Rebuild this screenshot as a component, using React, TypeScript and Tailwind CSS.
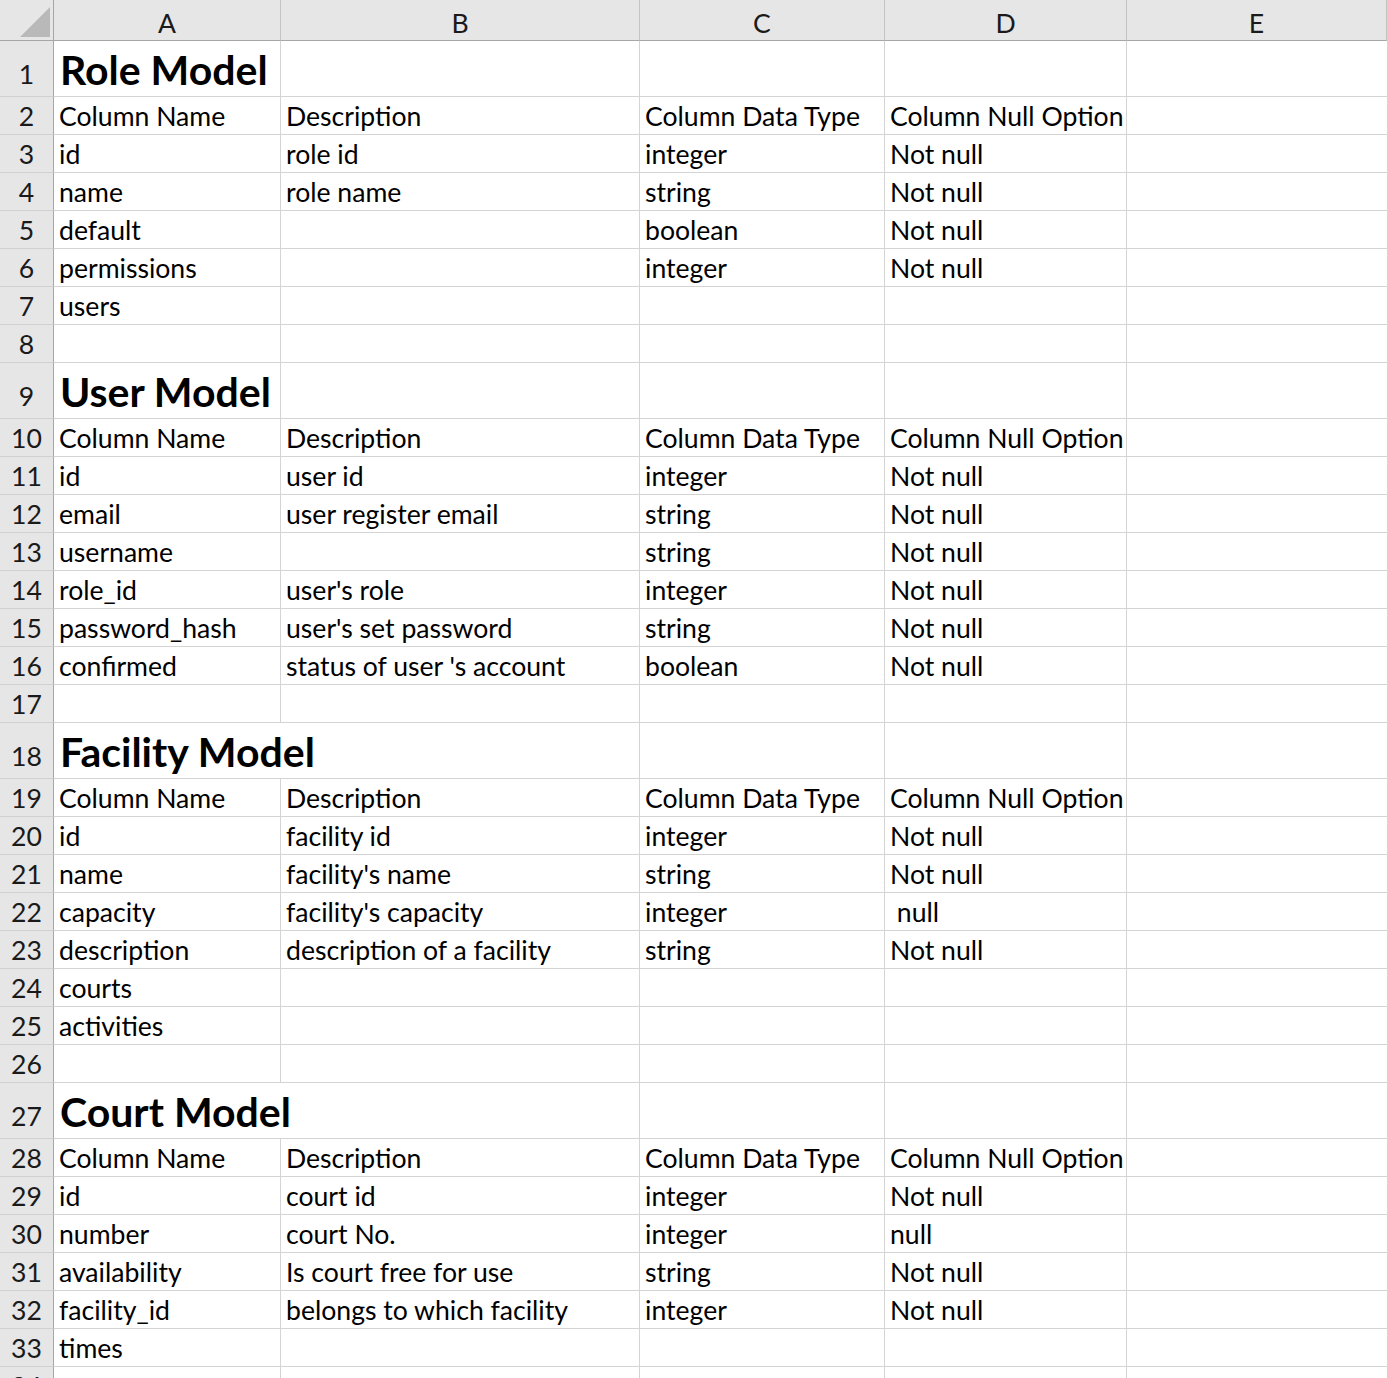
import React from "react";

type Row = { kind: "title" | "data"; cells: string[]; over?: boolean };

const T = (s: string, over = false): Row => ({ kind: "title", cells: [s], over });
const D = (...c: string[]): Row => ({ kind: "data", cells: c });
const H = () => D("Column Name", "Description", "Column Data Type", "Column Null Option");

const rows: Row[] = [
  T("Role Model"),
  H(),
  D("id", "role id", "integer", "Not null"),
  D("name", "role name", "string", "Not null"),
  D("default", "", "boolean", "Not null"),
  D("permissions", "", "integer", "Not null"),
  D("users"),
  D(),
  T("User Model"),
  H(),
  D("id", "user id", "integer", "Not null"),
  D("email", "user register email", "string", "Not null"),
  D("username", "", "string", "Not null"),
  D("role_id", "user's role", "integer", "Not null"),
  D("password_hash", "user's set password", "string", "Not null"),
  D("confirmed", "status of user 's account", "boolean", "Not null"),
  D(),
  T("Facility Model", true),
  H(),
  D("id", "facility id", "integer", "Not null"),
  D("name", "facility's name", "string", "Not null"),
  D("capacity", "facility's capacity", "integer", "\u00a0null"),
  D("description", "description of a facility", "string", "Not null"),
  D("courts"),
  D("activities"),
  D(),
  T("Court Model", true),
  H(),
  D("id", "court id", "integer", "Not null"),
  D("number", "court No.", "integer", "null"),
  D("availability", "Is court free for use", "string", "Not null"),
  D("facility_id", "belongs to which facility", "integer", "Not null"),
  D("times"),
  D(),
];

const font = { fontFamily: "Lato, 'Open Sans', sans-serif" };

export default function App() {
  return (
    <div className="w-[1387px] h-[1378px] overflow-hidden bg-white text-black" style={font}>
      <div className="grid grid-cols-[54px_227px_359px_245px_242px_1fr]">
        {/* header row */}
        <div className="relative h-[41px] bg-[#e6e6e6] border-r border-b border-[#a6a6a6]">
          <div className="absolute right-[3px] bottom-[3px] w-0 h-0 border-l-[30px] border-l-transparent border-b-[30px] border-b-[#b9b9b9]" />
        </div>
        {["A", "B", "C", "D", "E"].map((l) => (
          <div
            key={l}
            className="h-[41px] bg-[#e6e6e6] border-r border-[#c3c3c3] border-b border-b-[#a6a6a6] flex items-end justify-center pb-[3px] text-[26.6px] leading-none text-[#1a1a1a]"
          >
            {l}
          </div>
        ))}
        {rows.map((r, i) => {
          const title = r.kind === "title";
          const h = title ? "h-[56px]" : "h-[38px]";
          return (
            <React.Fragment key={i}>
              <div
                className={`${h} bg-[#e6e6e6] border-r border-[#a6a6a6] border-b border-b-[#d0d0d0] flex items-end justify-center ${title ? "pb-[8px]" : "pb-[4px]"} text-[26.6px] leading-none text-[#1a1a1a]`}
              >
                {i + 1}
              </div>
              {title ? (
                <>
                  <div
                    className={`${h} ${r.over ? "" : "border-r"} border-b border-[#d4d4d4] flex items-end pl-[6px] pb-[6px] whitespace-nowrap`}
                  >
                    <span className="text-[41px] font-bold leading-none relative z-10">{r.cells[0]}</span>
                  </div>
                  <div className={`${h} border-r border-b border-[#d4d4d4]`} />
                  <div className={`${h} border-r border-b border-[#d4d4d4]`} />
                  <div className={`${h} border-r border-b border-[#d4d4d4]`} />
                  <div className={`${h} border-b border-[#d4d4d4]`} />
                </>
              ) : (
                [0, 1, 2, 3, 4].map((c) => (
                  <div
                    key={c}
                    className={`${h} ${c < 4 ? "border-r" : ""} border-b border-[#d4d4d4] flex items-end pl-[5px] pb-[4px] text-[26.6px] leading-none whitespace-nowrap overflow-hidden`}
                  >
                    {r.cells[c] ?? ""}
                  </div>
                ))
              )}
            </React.Fragment>
          );
        })}
      </div>
    </div>
  );
}
